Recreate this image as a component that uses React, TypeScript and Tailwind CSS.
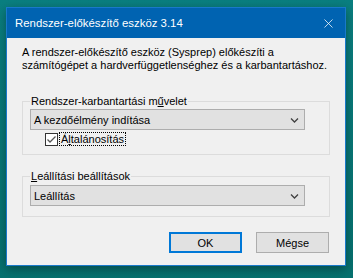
import { X } from 'lucide-react';

function Chevron() {
  return (
    <svg width="9" height="6" viewBox="0 0 9 6" className="shrink-0">
      <path d="M1 1.5 L4.5 5 L8 1.5" fill="none" stroke="#404040" strokeWidth="1.3" />
    </svg>
  );
}

function Combo({ value }: { value: string }) {
  return (
    <div className="flex h-[21px] w-[275px] items-center justify-between border border-[#adadad] bg-[#e1e1e1] pl-[3px] pr-[5px]">
      <span className="leading-[14px]">{value}</span>
      <Chevron />
    </div>
  );
}

export default function App() {
  return (
    <div
      className="h-[278px] w-[353px] overflow-hidden bg-gradient-to-b from-[#0a7f80] to-[#06716f] pl-[6px] pt-[7px] text-[11px] text-black"
      style={{ fontFamily: '"Liberation Sans", Arial, sans-serif' }}
    >
      <div className="flex h-[259px] w-[340px] flex-col border border-[#1979ca] bg-[#f0f0f0] shadow-[0_3px_10px_rgba(0,0,0,0.35)]">
        {/* title bar */}
        <div className="flex h-[30px] items-center justify-between bg-[#0063b1] pl-[8px] pr-[9px] text-[11.4px] text-white">
          <span className="whitespace-nowrap leading-[14px]">Rendszer-előkészítő eszköz 3.14</span>
          <X size={15} strokeWidth={1.2} />
        </div>

        <div className="flex flex-col pl-[15px] pt-[8px]">
          <p className="whitespace-nowrap leading-[13px]">
            A rendszer-előkészítő eszköz (Sysprep) előkészíti a
            <br />
            számítógépet a hardverfüggetlenséghez és a karbantartáshoz.
          </p>

          <fieldset className="mt-[22px] w-[308px] border border-[#dcdcdc] px-[7px] pb-[8px]">
            <legend className="whitespace-nowrap px-[1px] leading-[14px]">
              Rendszer-karbantartási m<span className="underline">ű</span>velet
            </legend>
            <div className="mt-[1px]">
              <Combo value="A kezdőélmény indítása" />
            </div>
            <div className="mt-[2px] flex items-center pl-[15px]">
              <div className="flex h-[13px] w-[13px] items-center justify-center border border-[#333] bg-white">
                <svg width="11" height="11" viewBox="0 0 11 11">
                  <path d="M1.5 5.5 L4 8 L9.5 2.5" fill="none" stroke="#555" strokeWidth="1.3" />
                </svg>
              </div>
              <span className="ml-[1px] border border-dotted border-black px-[1px] leading-[12px]">
                Á<span className="underline">l</span>talánosítás
              </span>
            </div>
          </fieldset>

          <fieldset className="mt-[14px] w-[308px] border border-[#dcdcdc] px-[7px] pb-[10px]">
            <legend className="whitespace-nowrap px-[1px] leading-[14px]">
              <span className="underline">L</span>eállítási beállítások
            </legend>
            <div className="mt-[2px]">
              <Combo value="Leállítás" />
            </div>
          </fieldset>

          <div className="mt-[15px] flex w-[307px] justify-end gap-[14px]">
            <button className="h-[21px] w-[73px] border-2 border-[#0078d7] bg-[#e1e1e1] leading-[14px]">OK</button>
            <button className="h-[21px] w-[73px] border border-[#adadad] bg-[#e1e1e1] leading-[14px]">Mégse</button>
          </div>
        </div>
      </div>
    </div>
  );
}
